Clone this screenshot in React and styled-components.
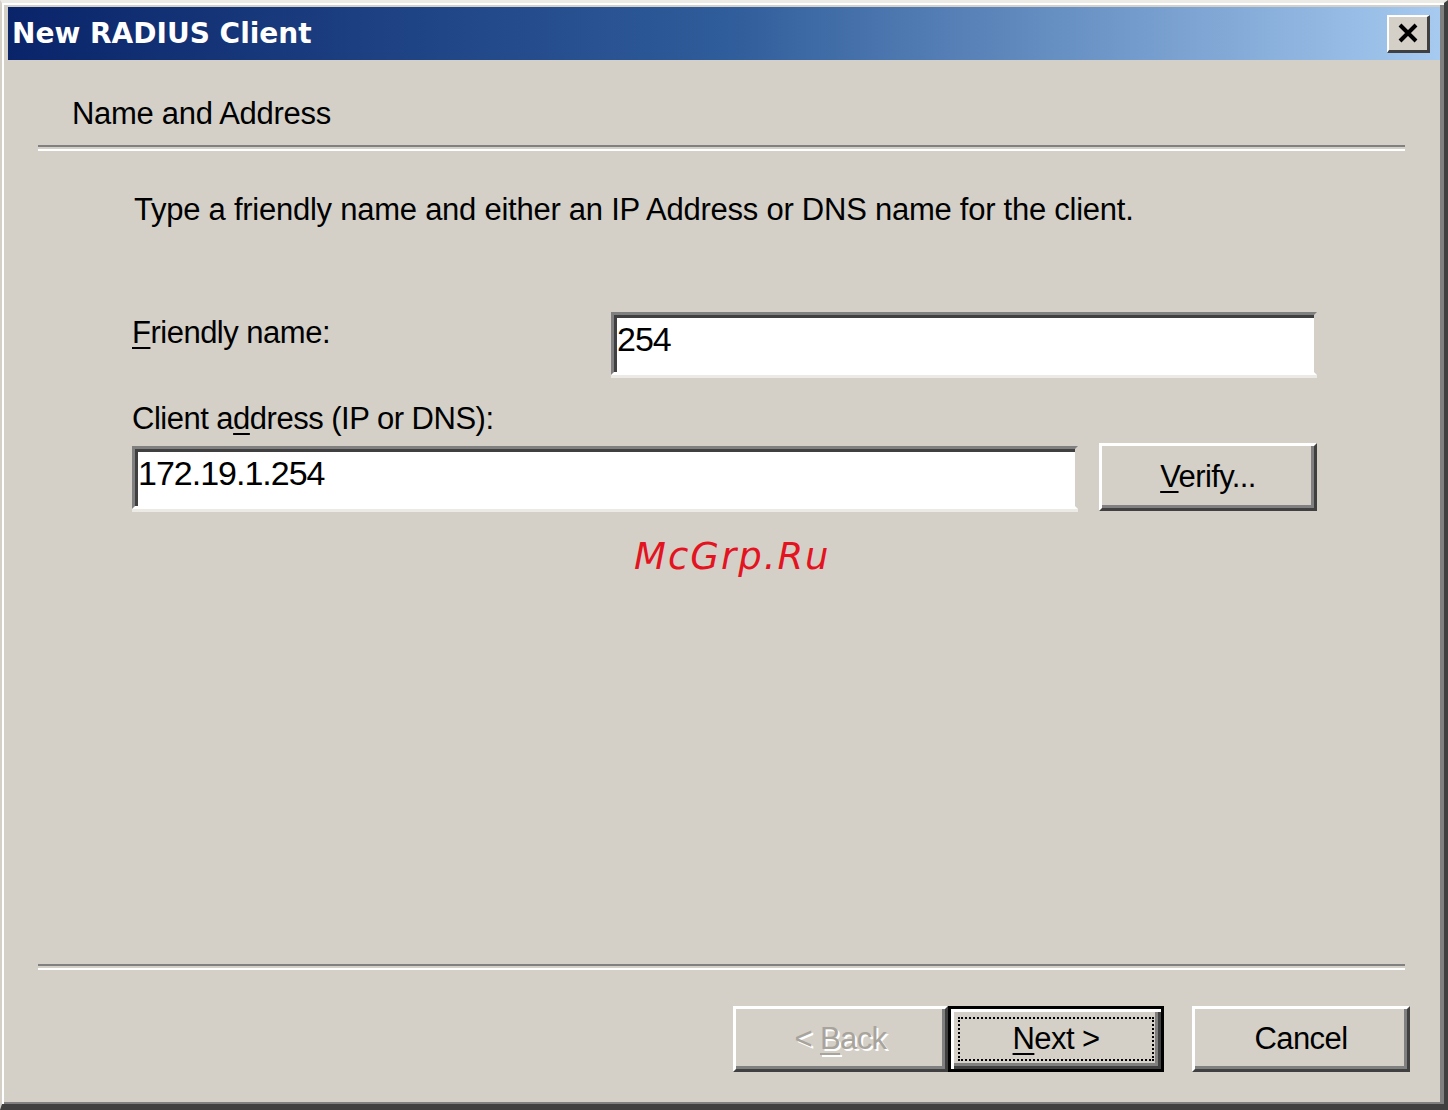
import React from "react";
import styled, { createGlobalStyle } from "styled-components";

const GlobalStyle = createGlobalStyle`
  html, body {
    margin: 0;
    padding: 0;
    background: #d4d0c8;
  }
  body {
    font-family: "Liberation Sans", Arial, sans-serif;
    color: #000;
  }
`;

const Window = styled.div`
  position: relative;
  width: 1448px;
  height: 1110px;
  box-sizing: border-box;
  background: #d4d0c8;
  border-top: 3px solid #eceae4;
  border-left: 2px solid #d4d0c8;
  border-right: 4px solid #404040;
  border-bottom: 6px solid #404040;
  box-shadow: inset 2px 2px 0 #ffffff, inset -4px -2px 0 #808080;
  padding: 4px 4px 0 6px;
  display: flex;
  flex-direction: column;
`;

const TitleBar = styled.div`
  height: 53px;
  display: flex;
  align-items: center;
  justify-content: space-between;
  padding: 0 10px 0 4px;
  background: linear-gradient(to right, #0a246a 0%, #2f5c9a 50%, #a6caf0 100%);
`;

const TitleText = styled.span`
  font-family: "DejaVu Sans", Verdana, sans-serif;
  font-weight: bold;
  font-size: 28px;
  color: #ffffff;
  letter-spacing: 0;
`;

const CloseButton = styled.div`
  width: 43px;
  height: 38px;
  box-sizing: border-box;
  background: #d4d0c8;
  border-top: 2px solid #ffffff;
  border-left: 2px solid #ffffff;
  border-right: 3px solid #404040;
  border-bottom: 3px solid #404040;
  display: flex;
  align-items: center;
  justify-content: center;
`;

const Header = styled.div`
  height: 85px;
  box-sizing: border-box;
  padding: 36px 0 0 64px;
  font-size: 31px;
  letter-spacing: -0.3px;
`;

const Separator = styled.div`
  margin: 0 35px 0 30px;
  height: 2px;
  border-top: 2px solid #808080;
  border-bottom: 2px solid #ffffff;
`;

const Body = styled.div`
  flex: 1;
  padding: 41px 123px 0 124px;
`;

const Intro = styled.div`
  font-size: 31px;
  letter-spacing: -0.25px;
  padding-left: 2px;
`;

const FieldRow = styled.div`
  display: flex;
  align-items: flex-start;
  justify-content: space-between;
  margin-top: 84px;
`;

const Label = styled.div`
  font-size: 31px;
  letter-spacing: -0.5px;
  padding-top: 3px;
`;

const Underline = styled.span`
  text-decoration: underline;
  text-underline-offset: 4px;
  text-decoration-thickness: 2px;
`;

const TextBox = styled.div`
  width: ${(p) => p.$width}px;
  height: 63px;
  box-sizing: border-box;
  background: #ffffff;
  border-top: 3px solid #808080;
  border-left: 3px solid #808080;
  border-right: 3px solid #d4d0c8;
  border-bottom: 3px solid #ffffff;
  box-shadow: inset 3px 3px 0 #404040, 0 3px 0 #eceae4;
  padding: 5px 0 0 3px;
  font-size: 34px;
  letter-spacing: -1px;
`;

const AddressBlock = styled.div`
  margin-top: 23px;
`;

const AddressRow = styled.div`
  display: flex;
  align-items: center;
  justify-content: space-between;
  margin-top: 6px;
`;

const Button = styled.div`
  width: ${(p) => p.$width || 216}px;
  height: ${(p) => p.$height || 66}px;
  box-sizing: border-box;
  background: #d4d0c8;
  border-top: 3px solid #ffffff;
  border-left: 3px solid #ffffff;
  border-right: 3px solid #404040;
  border-bottom: 3px solid #404040;
  box-shadow: inset -3px -3px 0 #808080;
  display: flex;
  align-items: center;
  justify-content: center;
  font-size: 31px;
  letter-spacing: -0.6px;
  color: ${(p) => (p.$disabled ? "#a8a49c" : "#000")};
  text-shadow: ${(p) => (p.$disabled ? "2px 2px 0 #ffffff" : "none")};
`;

const DefaultButton = styled(Button)`
  border: 3px solid #000000;
  box-shadow: inset 3px 3px 0 #ffffff, inset -3px -3px 0 #404040,
    inset -6px -6px 0 #808080;
`;

const FocusRing = styled.span`
  display: flex;
  align-items: center;
  justify-content: center;
  width: 192px;
  height: 40px;
  border: 2px dotted #000;
`;

const Footer = styled.div`
  display: flex;
  justify-content: flex-end;
  align-items: center;
  padding: 36px 30px 32px 0;
  gap: 28px;
`;

const WizardNav = styled.div`
  display: flex;
`;

const Watermark = styled.div`
  position: absolute;
  left: 632px;
  top: 532px;
  font-family: "DejaVu Sans", Verdana, sans-serif;
  font-style: italic;
  font-size: 37px;
  letter-spacing: 2px;
  color: #e3141f;
`;

export default function App() {
  return (
    <>
      <GlobalStyle />
      <Window>
        <TitleBar>
          <TitleText>New RADIUS Client</TitleText>
          <CloseButton>
            <svg width="22" height="20" viewBox="0 0 22 20">
              <path d="M3 2 L19 18 M19 2 L3 18" stroke="#000" strokeWidth="4" />
            </svg>
          </CloseButton>
        </TitleBar>
        <Header>Name and Address</Header>
        <Separator />
        <Body>
          <Intro>
            Type a friendly name and either an IP Address or DNS name for the client.
          </Intro>
          <FieldRow>
            <Label>
              <Underline>F</Underline>riendly name:
            </Label>
            <TextBox $width={706}>254</TextBox>
          </FieldRow>
          <AddressBlock>
            <Label>
              Client a<Underline>d</Underline>dress (IP or DNS):
            </Label>
            <AddressRow>
              <TextBox $width={946}>172.19.1.254</TextBox>
              <Button $width={218} $height={68}>
                <span>
                  <Underline>V</Underline>erify...
                </span>
              </Button>
            </AddressRow>
          </AddressBlock>
        </Body>
        <Separator />
        <Footer>
          <WizardNav>
            <Button $width={215} $disabled>
              <span>
                &lt; <Underline>B</Underline>ack
              </span>
            </Button>
            <DefaultButton $width={216}>
              <FocusRing>
                <Underline>N</Underline>ext &gt;
              </FocusRing>
            </DefaultButton>
          </WizardNav>
          <Button $width={218}>Cancel</Button>
        </Footer>
        <Watermark>McGrp.Ru</Watermark>
      </Window>
    </>
  );
}
